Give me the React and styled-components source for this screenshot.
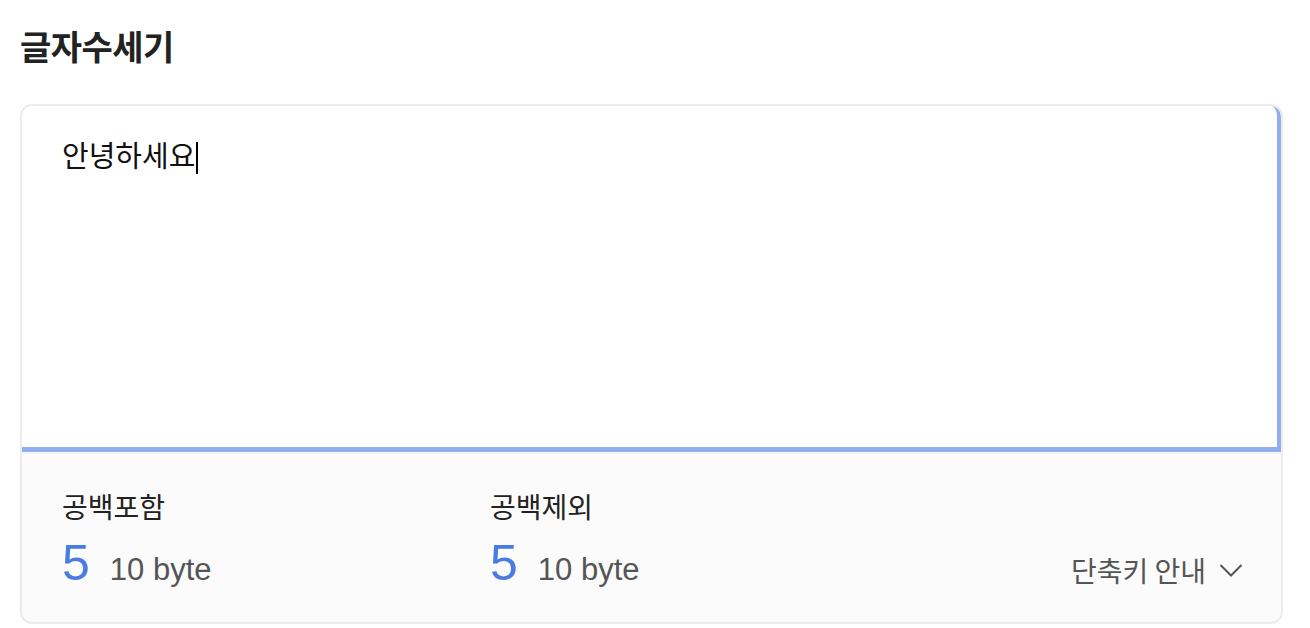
import React from "react";
import styled, { createGlobalStyle } from "styled-components";

const Global = createGlobalStyle`
  html, body { margin: 0; padding: 0; background: #fff; }
  body { font-family: "Liberation Sans", "Noto Sans CJK KR", sans-serif; }
`;

const Page = styled.div`
  padding: 22px 27px 0 20px;
`;

const Title = styled.h1`
  margin: 0 0 34px 0;
  font-size: 34px;
  line-height: 48px;
  font-weight: 700;
  color: #222;
  letter-spacing: -0.5px;
  font-family: "Noto Sans CJK KR", sans-serif;
`;

const Card = styled.div`
  border: 2px solid #ececec;
  border-radius: 12px;
  overflow: hidden;
  background: #fbfbfb;
`;

const Editor = styled.div`
  height: 346px;
  background: #fff;
  border-right: 4px solid #91aef0;
  border-bottom: 5px solid #91aef0;
  border-top-right-radius: 10px;
  padding: 28px 40px;
  box-sizing: border-box;
  font-family: "Noto Sans CJK KR", sans-serif;
  font-size: 29px;
  line-height: 40px;
  color: #111;
  margin-bottom: 1px;
`;

const Caret = styled.span`
  display: inline-block;
  width: 2px;
  height: 32px;
  background: #000;
  vertical-align: -7px;
  margin-left: 1px;
`;

const Footer = styled.div`
  display: flex;
  align-items: flex-end;
  padding: 32px 38px 29px 40px;
  border-top: 1px solid #f1f1f1;
`;

const Stat = styled.div`
  width: 428px;
  display: flex;
  flex-direction: column;
`;

const Label = styled.div`
  font-family: "Noto Sans CJK KR", sans-serif;
  font-size: 28px;
  line-height: 40px;
  color: #222;
`;

const Values = styled.div`
  display: flex;
  align-items: baseline;
  gap: 20px;
  margin-top: 7px;
`;

const Count = styled.span`
  font-size: 50px;
  line-height: 60px;
  color: #4a7be0;
`;

const Bytes = styled.span`
  font-size: 31px;
  color: #555;
`;

const Shortcut = styled.button`
  margin-left: auto;
  margin-bottom: 3px;
  display: flex;
  align-items: center;
  gap: 13px;
  border: none;
  background: none;
  padding: 0;
  cursor: pointer;
  font-family: "Noto Sans CJK KR", sans-serif;
  font-size: 28px;
  line-height: 40px;
  color: #555;
`;

function Chevron() {
  return (
    <svg width="24" height="14" viewBox="0 0 24 14" fill="none">
      <polyline points="1.5,2 12,12.5 22.5,2" stroke="#555" strokeWidth="2" fill="none" />
    </svg>
  );
}

export default function App() {
  return (
    <>
      <Global />
      <Page>
        <Title>글자수세기</Title>
        <Card>
          <Editor>
            안녕하세요<Caret />
          </Editor>
          <Footer>
            <Stat>
              <Label>공백포함</Label>
              <Values>
                <Count>5</Count>
                <Bytes>10 byte</Bytes>
              </Values>
            </Stat>
            <Stat>
              <Label>공백제외</Label>
              <Values>
                <Count>5</Count>
                <Bytes>10 byte</Bytes>
              </Values>
            </Stat>
            <Shortcut>
              단축키 안내 <Chevron />
            </Shortcut>
          </Footer>
        </Card>
      </Page>
    </>
  );
}
